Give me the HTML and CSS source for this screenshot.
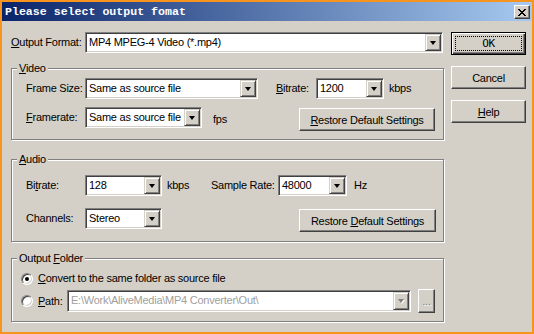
FILE: index.html
```html
<!DOCTYPE html>
<html>
<head>
    <title>Please select output fomat</title>
    <link rel="stylesheet" href="styles.css">
</head>
<body>
    <div class="window">
        <div class="titlebar">
            <span class="title">Please select output fomat</span>
            <button class="close">
                <svg width="8" height="7" viewBox="0 0 8 7"><path d="M0 0h2v1H0zM6 0h2v1H6zM1 1h2v1H1zM5 1h2v1H5zM2 2h4v1H2zM3 3h2v1H3zM2 4h4v1H2zM1 5h2v1H1zM5 5h2v1H5zM0 6h2v1H0zM6 6h2v1H6z" fill="#000"/></svg>
            </button>
        </div>

        <div class="body">
            <div class="main">
                <div class="row format-row">
                    <span class="label w-format"><u>O</u>utput Format:</span>
                    <div class="combo w-358">
                        <span class="value">MP4 MPEG-4 Video (*.mp4)</span>
                        <span class="drop"><i class="arrow"></i></span>
                    </div>
                </div>

                <div class="group video">
                    <div class="legend"><u>V</u>ideo</div>
                    <div class="row first">
                        <span class="label w-59">Frame Size:</span>
                        <div class="combo w-173">
                            <span class="value">Same as source file</span>
                            <span class="drop"><i class="arrow"></i></span>
                        </div>
                        <span class="label vbit-label"><u>B</u>itrate:</span>
                        <div class="combo w-68">
                            <span class="value">1200</span>
                            <span class="drop"><i class="arrow"></i></span>
                        </div>
                        <span class="unit">kbps</span>
                    </div>
                    <div class="row second">
                        <span class="label w-59"><u>F</u>ramerate:</span>
                        <div class="combo w-117">
                            <span class="value">Same as source file</span>
                            <span class="drop"><i class="arrow"></i></span>
                        </div>
                        <span class="unit fps">fps</span>
                        <button class="btn restore"><u>R</u>estore Default Settings</button>
                    </div>
                </div>

                <div class="group audio">
                    <div class="legend"><u>A</u>udio</div>
                    <div class="row first">
                        <span class="label w-59">Bi<u>t</u>rate:</span>
                        <div class="combo w-77">
                            <span class="value">128</span>
                            <span class="drop"><i class="arrow"></i></span>
                        </div>
                        <span class="unit kbps-wide">kbps</span>
                        <span class="label w-67">Sample Rate:</span>
                        <div class="combo w-69">
                            <span class="value">48000</span>
                            <span class="drop"><i class="arrow"></i></span>
                        </div>
                        <span class="unit hz">Hz</span>
                    </div>
                    <div class="row second">
                        <span class="label w-59">Channels:</span>
                        <div class="combo w-77">
                            <span class="value">Stereo</span>
                            <span class="drop"><i class="arrow"></i></span>
                        </div>
                        <button class="btn restore wide">Restore <u>D</u>efault Settings</button>
                    </div>
                </div>

                <div class="group folder">
                    <div class="legend">Output <u>F</u>older</div>
                    <div class="row radio-row">
                        <span class="radio checked"></span>
                        <span class="label"><u>C</u>onvert to the same folder as source file</span>
                    </div>
                    <div class="row path-row">
                        <span class="radio"></span>
                        <span class="label w-29"><u>P</u>ath:</span>
                        <div class="combo disabled w-344">
                            <span class="value">E:\Work\AliveMedia\MP4 Converter\Out\</span>
                            <span class="drop"><i class="arrow"></i></span>
                        </div>
                        <button class="btn browse">...</button>
                    </div>
                </div>
            </div>

            <div class="side">
                <button class="btn default"><span class="focus">OK</span></button>
                <button class="btn">Cancel</button>
                <button class="btn"><u>H</u>elp</button>
            </div>
        </div>
    </div>
</body>
</html>
```

FILE: styles.css
```css
body { margin: 0; font-family: "Liberation Sans", Arial, sans-serif; font-size: 11px; letter-spacing: -0.25px; color: #000; }
u { text-decoration: underline; text-underline-offset: 1px; }

.window { width: 534px; height: 334px; box-sizing: border-box; border: 2px solid #f7941d; background: #d4d0c8; display: flex; flex-direction: column; }

.titlebar { height: 19px; flex: none; display: flex; align-items: center; justify-content: space-between; padding: 0 2px 0 3px; background: linear-gradient(to right, #0a246a, #a6caf0); }
.title { color: #fff; font: bold 11.6px "Liberation Mono", monospace; letter-spacing: 0; }
.close { width: 16px; height: 14px; margin-top: 1px; padding: 0; display: flex; align-items: center; justify-content: center; background: #d4d0c8; border: 1px solid; border-color: #fff #404040 #404040 #fff; box-shadow: inset -1px -1px #808080; }

.body { display: flex; gap: 7px; padding: 11px 5px 0 9px; }
.main { width: 433px; }
.side { width: 75px; display: flex; flex-direction: column; gap: 11px; }

.row { display: flex; align-items: center; }
.label { line-height: 13px; white-space: nowrap; flex: none; }
.unit { line-height: 13px; flex: none; }

.w-format { width: 74px; }
.w-59 { width: 59px; }
.w-67 { width: 67px; }
.w-29 { width: 29px; }
.w-358 { width: 358px; }
.w-173 { width: 173px; }
.w-117 { width: 117px; }
.w-68 { width: 68px; }
.w-77 { width: 77px; }
.w-69 { width: 69px; }
.w-344 { width: 344px; }

/* combo box */
.combo { height: 21px; flex: none; box-sizing: border-box; display: flex; padding: 1px; background: #fff; border: 1px solid; border-color: #808080 #fff #fff #808080; box-shadow: inset 1px 1px #404040, inset -1px -1px #d4d0c8; }
.combo .value { flex: 1; padding-left: 2px; line-height: 17px; white-space: nowrap; overflow: hidden; }
.drop { width: 16px; height: 17px; box-sizing: border-box; flex: none; display: flex; align-items: center; justify-content: center; background: #d4d0c8; border: 1px solid; border-color: #d4d0c8 #404040 #404040 #d4d0c8; box-shadow: inset 1px 1px #fff, inset -1px -1px #808080; }
.arrow { width: 0; height: 0; border-left: 3.5px solid transparent; border-right: 3.5px solid transparent; border-top: 4px solid #000; }
.combo.disabled .value { color: #a0a0a0; }
.combo.disabled .arrow { border-top-color: #808080; filter: drop-shadow(1px 1px 0 #fff); }

/* buttons */
.btn { height: 23px; box-sizing: border-box; padding: 0; font: inherit; letter-spacing: inherit; color: #000; background: #d4d0c8; border: 1px solid; border-color: #fff #404040 #404040 #fff; box-shadow: inset -1px -1px #808080; }
.btn.default { border-color: #000; box-shadow: inset 1px 1px #fff, inset -1px -1px #404040, inset -2px -2px #808080; padding: 3px; display: flex; }
.btn.default .focus { flex: 1; border: 1px dotted #000; display: flex; align-items: center; justify-content: center; font-family: "DejaVu Sans Mono", monospace; font-size: 11px; }

/* group boxes */
.group { border: 1px solid #808080; box-shadow: inset 1px 1px #fff, 1px 1px #fff; padding: 0 8px 8px 14px; }
.legend { display: table; margin: -7px 0 0 -9px; padding: 0 2px; line-height: 13px; background: #d4d0c8; }
.video { margin-top: 15px; }
.video .first { margin-top: 3px; }
.video .second { margin-top: 8px; align-items: flex-start; height: 24px; }
.vbit-label { width: 40px; margin-left: 18px; }
.unit { margin-left: 5px; }
.fps { margin-left: 11px; align-self: center; }
.second .label { align-self: flex-start; line-height: 21px; }
.restore { width: 136px; margin-left: auto; margin-top: 1px; }
.restore.wide { width: 137px; margin-right: -1px; }

.audio { margin-top: 19px; padding-bottom: 9px; }
.audio .first { margin-top: 9px; }
.audio .second { margin-top: 12px; align-items: flex-start; height: 24px; }
.kbps-wide { width: 44px; }
.hz { margin-left: 7px; }

.folder { margin-top: 16px; padding-left: 9px; }
.folder .legend { margin-left: -4px; }
.radio-row { margin-top: 6px; height: 15px; }
.path-row { margin-top: 3px; height: 24px; }
.radio { width: 12px; height: 12px; flex: none; box-sizing: border-box; margin-right: 5px; border-radius: 50%; background: #fff; border: 1px solid; border-color: #808080 #fff #fff #808080; box-shadow: inset 1px 1px #404040, inset -1px -1px #d4d0c8; display: flex; align-items: center; justify-content: center; }
.radio.checked::after { content: ""; width: 4px; height: 4px; border-radius: 50%; background: #000; }
.path-row .combo { height: 22px; }
.path-row .combo .drop { height: 18px; }
.browse { width: 20px; height: 24px; margin-left: 7px; color: #808080; text-shadow: 1px 1px #fff; }
```
